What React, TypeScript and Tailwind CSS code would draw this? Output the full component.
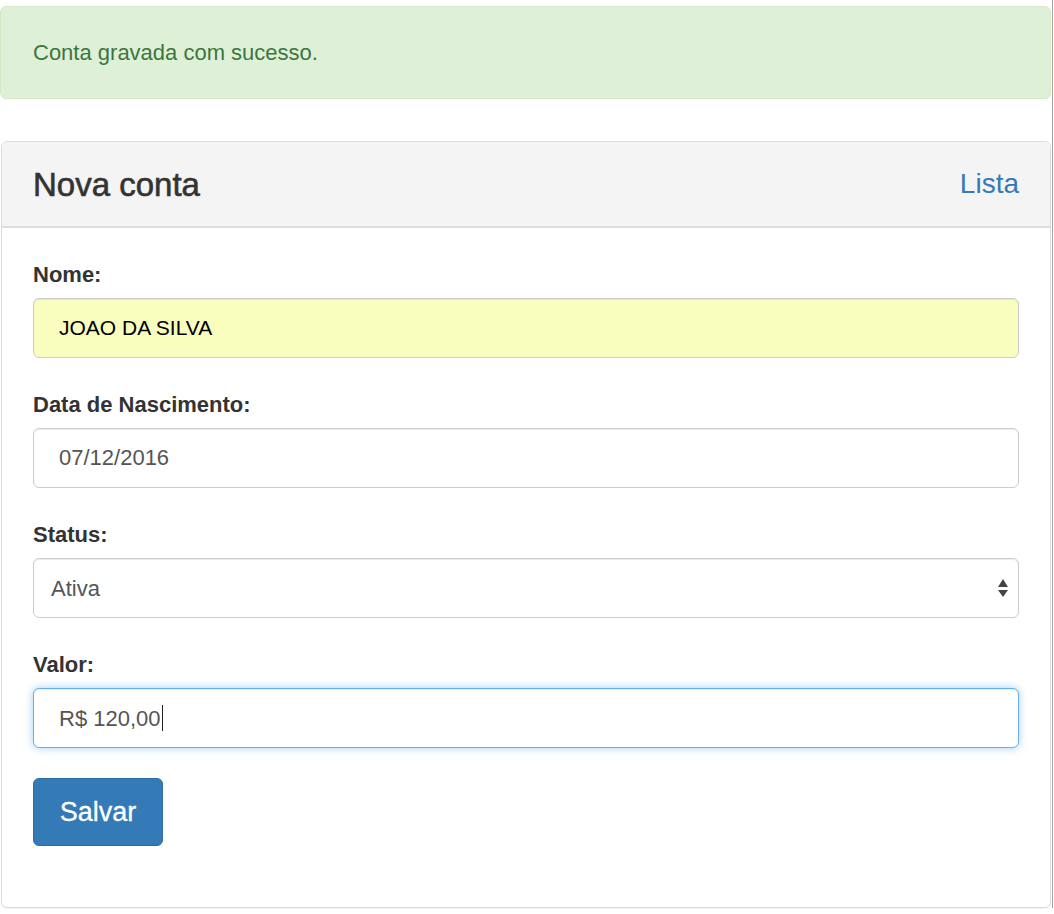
import React from 'react';

const font = { fontFamily: '"Liberation Sans", Arial, sans-serif' };

const Field = ({
  label,
  children,
  last,
}: {
  label: string;
  children: React.ReactNode;
  last?: boolean;
}) => (
  <div className={last ? 'mb-[30px]' : 'mb-[35px]'}>
    <label className="mb-[11px] block text-[22px] font-bold leading-[24px] text-[#333]">
      {label}
    </label>
    {children}
  </div>
);

const App = () => {
  return (
    <div className="min-h-[914px] bg-white" style={font}>
      <div className="w-[1053px] border-r border-[#a3a3a3] pt-[6px]">
        <div className="flex h-[93px] w-[1051px] items-center rounded-[6px] border border-[#d6e9c6] bg-[#dff0d8] px-[32px] text-[22px] text-[#3c763d]">
          Conta gravada com sucesso.
        </div>

        <div className="mt-[42px] ml-px w-[1050px] rounded-[6px] border border-[#dcdcdc] bg-white shadow-[0_1px_1px_rgba(0,0,0,0.05)]">
          <div className="flex h-[86px] items-center justify-between rounded-t-[6px] border-b-2 border-[#dcdcdc] bg-[#f4f4f4] px-[31px]">
            <h3 className="text-[33px] leading-none text-[#333] [-webkit-text-stroke:0.6px_#333]">
              Nova conta
            </h3>
            <a href="#" className="text-[28px] leading-none text-[#337ab7]">
              Lista
            </a>
          </div>

          <div className="px-[31px] pt-[35px] pb-[61px]">
            <Field label="Nome:">
              <input
                readOnly
                value="JOAO DA SILVA"
                className="h-[60px] w-full rounded-[6px] border border-[#ccc] bg-[#f9fdbe] px-[25px] text-[21px] text-black shadow-[inset_0_1px_1px_rgba(0,0,0,0.075)] outline-none"
              />
            </Field>

            <Field label="Data de Nascimento:">
              <input
                readOnly
                value="07/12/2016"
                className="h-[60px] w-full rounded-[6px] border border-[#ccc] bg-white px-[25px] text-[22px] text-[#555] shadow-[inset_0_1px_1px_rgba(0,0,0,0.075)] outline-none"
              />
            </Field>

            <Field label="Status:">
              <div className="flex h-[60px] w-full items-center justify-between rounded-[6px] border border-[#ccc] bg-white pr-[9px] pl-[17px] text-[22px] text-[#555] shadow-[inset_0_1px_1px_rgba(0,0,0,0.075)]">
                <span>Ativa</span>
                <svg width="12" height="20" viewBox="0 0 12 20">
                  <path d="M6 1 L11 9 L1 9 Z" fill="#444" />
                  <path d="M1 12 L11 12 L6 19 Z" fill="#444" />
                </svg>
              </div>
            </Field>

            <Field label="Valor:" last>
              <div className="flex h-[60px] w-full items-center rounded-[6px] border border-[#66afe9] bg-white px-[25px] text-[22px] text-[#555] shadow-[inset_0_1px_1px_rgba(0,0,0,0.075),0_0_8px_rgba(102,175,233,0.6)]">
                <span>R$ 120,00</span>
                <span className="ml-px h-[26px] w-px bg-[#222]" />
              </div>
            </Field>

            <button className="h-[68px] w-[130px] rounded-[6px] border border-[#2e6da4] bg-[#337ab7] text-[27px] text-white [-webkit-text-stroke:0.3px_#fff]">
              Salvar
            </button>
          </div>
        </div>
      </div>
    </div>
  );
};

export default App;
